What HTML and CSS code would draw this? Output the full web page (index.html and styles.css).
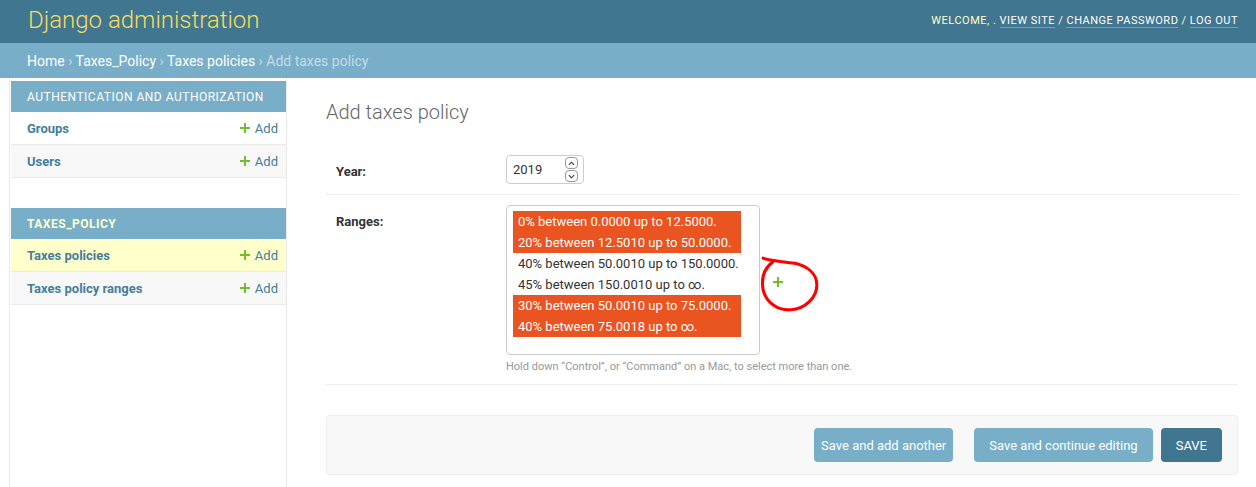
FILE: index.html
```html
<!DOCTYPE html>
<html lang="en">
<head>
<meta charset="utf-8">
<title>Add taxes policy | Django site admin</title>
<link rel="stylesheet" href="styles.css">
</head>
<body>
<header class="header">
  <div class="branding">Django administration</div>
  <div class="user-tools">Welcome, <strong>.</strong> <a href="#">View site</a> / <a href="#">Change password</a> / <a href="#">Log out</a></div>
</header>
<nav class="breadcrumbs"><a href="#">Home</a> › <a href="#">Taxes_Policy</a> › <a href="#">Taxes policies</a> › Add taxes policy</nav>
<div class="main">
  <div class="toggle"></div>
  <aside class="sidebar">
    <div class="module">
      <div class="caption">Authentication and Authorization</div>
      <div class="row"><a class="model" href="#">Groups</a><a class="addlink" href="#"><svg class="plus" viewBox="0 0 10 10"><path d="M4 0h2v4h4v2H6v4H4V6H0V4h4z"/></svg>Add</a></div>
      <div class="row alt"><a class="model" href="#">Users</a><a class="addlink" href="#"><svg class="plus" viewBox="0 0 10 10"><path d="M4 0h2v4h4v2H6v4H4V6H0V4h4z"/></svg>Add</a></div>
    </div>
    <div class="module">
      <div class="caption current">Taxes_Policy</div>
      <div class="row current-model"><a class="model" href="#">Taxes policies</a><a class="addlink" href="#"><svg class="plus" viewBox="0 0 10 10"><path d="M4 0h2v4h4v2H6v4H4V6H0V4h4z"/></svg>Add</a></div>
      <div class="row alt"><a class="model" href="#">Taxes policy ranges</a><a class="addlink" href="#"><svg class="plus" viewBox="0 0 10 10"><path d="M4 0h2v4h4v2H6v4H4V6H0V4h4z"/></svg>Add</a></div>
    </div>
  </aside>
  <main class="content">
    <h1 class="title">Add taxes policy</h1>
    <div class="form-row">
      <label class="label">Year:</label>
      <div class="num-input">
        <span class="num-value">2019</span>
        <span class="spinner">
          <span class="spin"><svg viewBox="0 0 8 5"><path d="M1 4L4 1L7 4" fill="none" stroke="#333" stroke-width="1.2"/></svg></span>
          <span class="spin"><svg viewBox="0 0 8 5"><path d="M1 1L4 4L7 1" fill="none" stroke="#333" stroke-width="1.2"/></svg></span>
        </span>
      </div>
    </div>
    <div class="form-row">
      <label class="label">Ranges:</label>
      <div class="field">
        <div class="widget-wrap">
          <div class="multi-select">
            <div class="option selected">0% between 0.0000 up to 12.5000.</div>
            <div class="option selected">20% between 12.5010 up to 50.0000.</div>
            <div class="option">40% between 50.0010 up to 150.0000.</div>
            <div class="option">45% between 150.0010 up to ∞.</div>
            <div class="option selected">30% between 50.0010 up to 75.0000.</div>
            <div class="option selected">40% between 75.0018 up to ∞.</div>
          </div>
          <a class="related-add" href="#"><svg class="plus" viewBox="0 0 10 10"><path d="M4 0h2v4h4v2H6v4H4V6H0V4h4z"/></svg>
            <svg class="scribble" viewBox="0 0 62 60"><path d="M5 5 C12 8 24 8 36 10 C48 13 57 20 57 31 C57 43 46 54 32 55 C19 56 8 48 5 36 C3 25 6 15 14 9" fill="none" stroke="#f00" stroke-width="3" stroke-linecap="round"/></svg>
          </a>
        </div>
        <div class="help">Hold down “Control”, or “Command” on a Mac, to select more than one.</div>
      </div>
    </div>
    <div class="submit-row">
      <button class="btn first" type="button">Save and add another</button>
      <button class="btn second" type="button">Save and continue editing</button>
      <button class="btn default" type="button">SAVE</button>
    </div>
  </main>
</div>
</body>
</html>
```

FILE: styles.css
```css
* { box-sizing: border-box; }
body {
  margin: 0;
  font-family: Roboto, "Liberation Sans", sans-serif;
  font-size: 14px;
  color: #333;
  background: #fff;
}
a { text-decoration: none; }

.header {
  display: flex;
  justify-content: space-between;
  align-items: center;
  height: 43px;
  padding: 0 18px 0 28px;
  background: #417690;
}
.branding {
  font-size: 24px;
  font-weight: 300;
  color: #f5dd5d;
  line-height: 28px;
  padding-bottom: 4px;
}
.user-tools {
  font-size: 11px;
  letter-spacing: 0.5px;
  text-transform: uppercase;
  color: #ffc;
  line-height: 14px;
  padding-bottom: 2px;
}
.user-tools strong { font-weight: 400; }
.user-tools a {
  color: #fff;
  border-bottom: 1px solid rgba(255,255,255,0.3);
}

.breadcrumbs {
  height: 35px;
  line-height: 35px;
  padding: 1px 27px 0;
  background: #79aec8;
  color: #c4dce8;
  font-size: 14px;
}
.breadcrumbs a { color: #fff; }

.main { display: flex; }
.toggle {
  width: 10px;
  border-right: 1px solid #eaeaea;
  flex: none;
}
.sidebar {
  flex: none;
  width: 277px;
  padding: 3px 0 0 1px;
  border-right: 1px solid #eaeaea;
  min-height: calc(100vh - 78px);
}
.module { margin-bottom: 30px; }
.caption {
  height: 31px;
  line-height: 30px;
  padding: 1px 16px 0;
  background: #79aec8;
  color: #fff;
  font-size: 12px;
  letter-spacing: 0.5px;
  text-transform: uppercase;
  white-space: nowrap;
}
.caption.current { color: #ffc; font-weight: 700; }
.row {
  display: flex;
  justify-content: space-between;
  align-items: center;
  height: 33px;
  padding: 0 8px 0 16px;
  border-bottom: 1px solid #eaeaea;
  font-size: 13px;
}
.row.alt { background: #f8f8f8; }
.row.current-model { background: #ffc; }
.model { color: #447e9b; font-weight: 700; }
.addlink { color: #447e9b; display: flex; align-items: center; }
.plus { width: 10px; height: 10px; fill: #70bf2b; margin-right: 5px; }

.content {
  flex: 1;
  padding: 22px 18px 0 39px;
}
.title {
  margin: 0 0 21px;
  font-size: 20px;
  font-weight: 300;
  line-height: 24px;
  color: #666;
}
.form-row {
  display: flex;
  padding: 10px;
  border-bottom: 1px solid #eee;
}
.label {
  width: 170px;
  flex: none;
  padding: 8px 10px 0 0;
  font-size: 13px;
  font-weight: 700;
  line-height: 18px;
  color: #333;
}
.num-input {
  display: flex;
  align-items: center;
  justify-content: space-between;
  width: 78px;
  height: 29px;
  padding: 0 5px 0 6px;
  border: 1px solid #ccc;
  border-radius: 4px;
  font-size: 13px;
}
.spinner { display: flex; flex-direction: column; gap: 1px; }
.spin {
  display: flex;
  align-items: center;
  justify-content: center;
  width: 13px;
  height: 12px;
  border: 1px solid #999;
  border-radius: 4px;
}
.spin svg { width: 7px; height: 5px; }

.widget-wrap { display: flex; align-items: center; }
.multi-select {
  width: 254px;
  height: 150px;
  padding: 5px 18px 5px 6px;
  border: 1px solid #ccc;
  border-radius: 4px;
}
.option {
  height: 21px;
  line-height: 21px;
  padding: 0 5px;
  font-size: 13px;
  color: #333;
  white-space: nowrap;
}
.option.selected { background: #e95420; color: #fff; }
.related-add {
  position: relative;
  display: block;
  margin: 4px 0 0 13px;
  line-height: 0;
}
.related-add .plus { margin: 0; }
.scribble {
  position: absolute;
  left: -15px;
  top: -24px;
  width: 64px;
  height: 62px;
}
.help {
  margin-top: 5px;
  font-size: 11px;
  line-height: 14px;
  color: #999;
}

.submit-row {
  display: flex;
  justify-content: flex-end;
  margin-top: 30px;
  padding: 12px 15px;
  background: #f8f8f8;
  border: 1px solid #eee;
  border-radius: 4px;
}
.btn {
  height: 34px;
  padding: 0 14px;
  border: none;
  border-radius: 4px;
  background: #79aec8;
  color: #fff;
  font-family: Roboto, "Liberation Sans", sans-serif;
  font-size: 13px;
}
.btn.first { padding: 0 7px; }
.btn.second { margin-left: 21px; padding: 0 15px; }
.btn.default { margin-left: 8px; padding: 0 15px; background: #417690; }
```
